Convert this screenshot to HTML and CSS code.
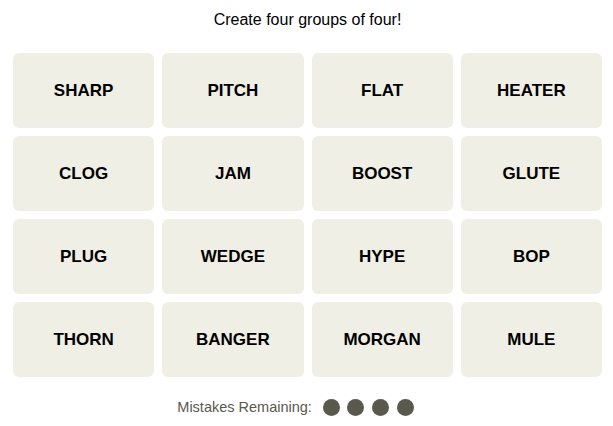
FILE: index.html
```html
<!DOCTYPE html>
<html>
<head>
<meta charset="utf-8">
<link rel="stylesheet" href="styles.css">
</head>
<body>
<main class="game">
  <p class="prompt">Create four groups of four!</p>
  <div class="board">
    <button class="tile">SHARP</button>
    <button class="tile">PITCH</button>
    <button class="tile">FLAT</button>
    <button class="tile">HEATER</button>
    <button class="tile">CLOG</button>
    <button class="tile">JAM</button>
    <button class="tile">BOOST</button>
    <button class="tile">GLUTE</button>
    <button class="tile">PLUG</button>
    <button class="tile">WEDGE</button>
    <button class="tile">HYPE</button>
    <button class="tile">BOP</button>
    <button class="tile">THORN</button>
    <button class="tile">BANGER</button>
    <button class="tile">MORGAN</button>
    <button class="tile">MULE</button>
  </div>
  <div class="mistakes">
    <span class="mistakes-label">Mistakes Remaining:</span>
    <span class="dots">
      <span class="dot"></span><span class="dot"></span><span class="dot"></span><span class="dot"></span>
    </span>
  </div>
</main>
</body>
</html>
```

FILE: styles.css
```css
html, body {
  margin: 0;
  padding: 0;
  background: #ffffff;
}
body {
  font-family: "Liberation Sans", Arial, sans-serif;
  color: #000;
}
.game {
  width: 589px;
  margin-left: 13px;
  padding-top: 10px;
}
.prompt {
  margin: 0;
  height: 20px;
  line-height: 20px;
  font-size: 16px;
  text-align: center;
}
.board {
  margin-top: 23px;
  display: grid;
  grid-template-columns: repeat(4, 1fr);
  grid-auto-rows: 75px;
  gap: 8px;
}
.tile {
  border: none;
  margin: 0;
  padding: 0;
  background: #efefe6;
  border-radius: 6px;
  font-family: "Liberation Sans", Arial, sans-serif;
  font-weight: 700;
  font-size: 17px;
  color: #000;
  display: flex;
  align-items: center;
  justify-content: center;
}
.mistakes {
  margin-top: 22px;
  display: flex;
  align-items: center;
  justify-content: center;
  gap: 11px;
  height: 17px;
  padding-right: 24px;
}
.mistakes-label {
  font-size: 14.5px;
  color: #5a594e;
  line-height: 17px;
}
.dots {
  display: flex;
  gap: 7.6px;
}
.dot {
  width: 17px;
  height: 17px;
  border-radius: 50%;
  background: #5a594e;
}
```
